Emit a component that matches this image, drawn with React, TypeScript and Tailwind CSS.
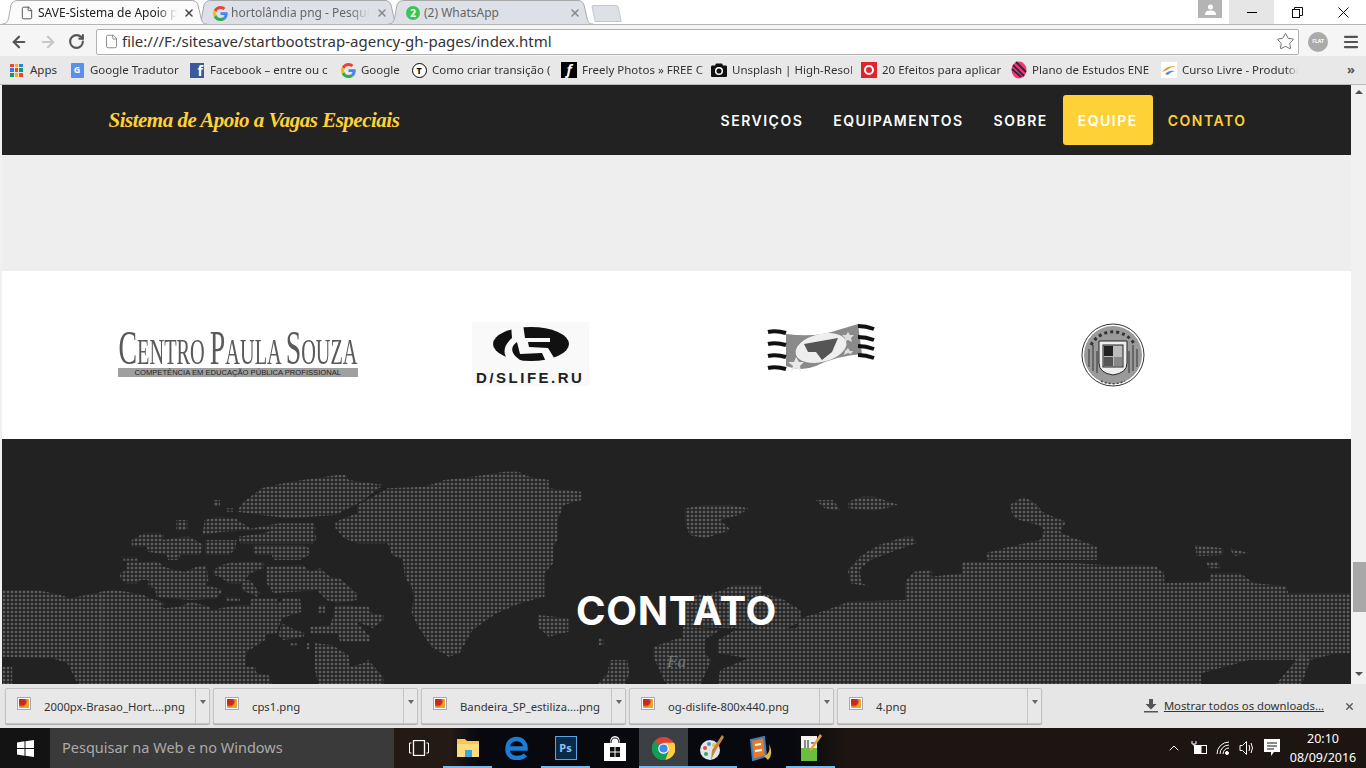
import { ArrowLeft, ArrowRight, ChevronUp, File, Menu, RotateCw, Star, X } from "lucide-react";

const uiFont = "font-['Noto_Sans',sans-serif]";

// map shapes traced from crops of the reference, each list has its own crop origin and scale
const leftLand: number[][] = [
  [1160,95,1190,95,1215,110,1260,120,1260,145,1335,155,1335,180,1295,195,1280,240,1280,300,1270,320,1270,370,1250,400,1250,470,1195,490,1140,520,1085,570,1055,640,1030,650,990,620,960,560,945,520,950,470,945,440,930,415,925,360,900,345,890,310,820,310,790,295,770,265,770,245,820,220,820,195,870,160,890,145,975,140,1020,120,1085,110],
  [695,120,775,105,795,105,800,120,880,135,830,185,770,225,660,235,600,225,545,215,555,190,600,145,650,130],
  [640,250,720,250,725,270,560,270],
  [405,240,430,240,430,270,405,270],
  [470,240,500,230,540,235,580,270,510,275,465,285],
  [5,450,85,450,140,465,160,475,235,455,235,735,180,735,155,670,120,655,5,650],
  [5,680,28,680,28,735,5,735],
  [1235,525,1305,535,1305,575,1260,590,1235,560],
  [1375,595,1385,595,1385,615,1375,615],
  [1400,660,1440,660,1445,700,1435,735,1370,735,1395,700],
  [1500,620,1568,590,1568,735,1530,735,1500,650],
  [490,180,505,180,505,200,490,200],
  [520,205,535,205,535,215,520,215],
];

const rightLand: number[][] = [
  [5,205,50,195,110,195,150,205,130,225,85,240,110,270,50,295,15,285,5,245],
  [305,180,345,180,362,212,325,205],
  [380,185,410,170,440,170,495,195,440,212,380,205],
  [780,170,805,185,830,220,880,245,865,275,880,285,950,320,950,360,700,360,695,340,750,320,820,300,830,270,815,255,760,235,750,195],
  [530,290,535,310,460,345,430,360,405,390,410,430,430,440,385,430,378,390,410,345,450,315,510,290],
  [1175,315,1240,325,1240,345,1180,348],
  [1255,325,1300,340,1265,348],
  [1200,365,1230,365,1232,385,1208,385],
  [640,365,905,370,1000,378,1040,375,1085,378,1105,400,1105,430,1210,425,1210,400,1280,400,1310,430,1385,438,1390,460,1535,460,1535,640,1500,640,1440,660,1300,660,1190,700,1190,735,80,735,85,690,150,655,80,640,80,600,120,570,260,565,270,535,330,510,380,485,510,480,510,425,530,395,570,390,570,410,640,400],
  [0,560,85,570,50,600,50,640,65,660,40,735,0,735],
  [90,450,115,435,180,435,180,460,225,475,270,510,270,545,230,570,0,560,0,470,60,462],
  [1360,735,1420,640,1440,660,1420,735],
];

const detailLand: number[][] = [
  [95,30,130,10,190,10,190,30,250,20,270,20,310,45,300,75,240,75,235,90,205,90,200,75,145,65,140,50,95,50],
  [315,30,410,30,405,60,385,75,315,75],
  [415,20,490,10,520,0,640,0,650,25,640,40,560,40,420,40],
  [460,45,610,45,628,55,628,75,600,90,520,90,515,75,460,75],
  [70,82,115,82,115,92,70,92],
  [80,95,175,95,190,110,225,120,255,125,290,110,320,105,325,150,320,165,370,180,350,205,270,210,170,200,165,175,145,170,145,150,120,150,115,160,80,160,60,145,60,130,80,120],
  [340,120,365,105,400,95,410,100,420,95,490,95,490,115,450,130,440,145,420,160,385,160,360,140,340,135],
  [425,150,450,150,480,190,470,200,425,180],
  [500,110,610,105,630,125,660,115,690,140,720,145,770,190,770,210,710,220,680,210,650,180,520,190,500,160],
  [378,200,420,205,420,212,378,212],
  [455,205,530,205,530,225,550,205,600,205,605,245,545,265,530,310,495,315,495,330,465,350,440,365,435,410,465,410,470,430,505,435,515,462,0,462,0,185,40,180,80,185,130,195,150,205,190,215,190,235,240,230,270,215,330,230,335,240,385,230,420,225,450,225],
  [655,225,675,225,675,248,655,248],
  [705,225,805,230,815,250,850,255,850,270,820,295,770,275,810,320,810,335,720,335,715,310,630,310,630,290,690,285,700,260],
  [545,280,575,295,615,310,610,320,550,330,535,315],
  [645,340,695,345,745,375,750,410,790,400,805,390,850,440,850,462,655,462,645,420],
  [570,340,590,340,590,348,570,348],
  [620,340,630,340,630,358,620,358],
];

const toPoints = (pts: number[], originX: number) =>
  pts.map((v, i) => (i % 2 === 0 ? originX + v / 2.296 : 440 + v / 3)).join(" ");

const detailPoints = (pts: number[]) =>
  pts.map((v, i) => (i % 2 === 0 ? 98 + v / 3 : 530 + v / 3)).join(" ");

function DotMap() {
  return (
    <svg className="absolute inset-0 h-full w-full" viewBox="0 439 1349 245" preserveAspectRatio="none">
      <defs>
        <pattern id="dots" x="0" y="2" width="4" height="4" patternUnits="userSpaceOnUse">
          <rect x="0.750" y="0.750" width="2.500" height="2.500" fill="#5e5e5e" />
        </pattern>
      </defs>
      {leftLand.map((p, i) => (
        <polygon key={"l" + i} points={toPoints(p, -2)} fill="url(#dots)" />
      ))}
      {rightLand.map((p, i) => (
        <polygon key={"r" + i} points={toPoints(p, 681)} fill="url(#dots)" />
      ))}
      {detailLand.map((p, i) => (
        <polygon key={"d" + i} points={detailPoints(p)} fill="url(#dots)" />
      ))}
    </svg>
  );
}

function GoogleG({ size = 16 }: { size?: number }) {
  return (
    <svg width={size} height={size} viewBox="0 0 48 48" className="shrink-0">
      <path fill="#EA4335" d="M24 9.5c3.5 0 6.7 1.3 9.1 3.5l6.8-6.8C35.8 2.4 30.2 0 24 0 14.6 0 6.5 5.4 2.6 13.2l7.9 6.2C12.400 13.600 17.700 9.500 24 9.500z" />
      <path fill="#4285F4" d="M47 24.500c0-1.600-.1-3.100-.4-4.500H24v9h12.900c-.6 3-2.200 5.500-4.700 7.200l7.600 5.900C44.300 37.900 47 31.700 47 24.500z" />
      <path fill="#FBBC05" d="M10.500 28.600A14.500 14.500 0 0 1 10.500 19.400l-7.900-6.200a24 24 0 0 0 0 21.600z" />
      <path fill="#34A853" d="M24 48c6.500 0 11.900-2.100 15.800-5.800l-7.600-5.900c-2.100 1.400-4.900 2.300-8.200 2.300-6.300 0-11.600-4.100-13.500-9.900l-7.900 6.200C6.500 42.600 14.600 48 24 48z" />
    </svg>
  );
}

function Tab({ title, icon, active, fade }: { title: string; icon: React.ReactNode; active?: boolean; fade?: boolean }) {
  return (
    <div className={`relative -mr-[12px] flex h-[24px] w-[205px] shrink-0 items-center pl-[17px] pr-[12px] pt-[2px] ${active ? "z-10 text-[#222]" : "text-[#666]"}`}>
      <svg className="absolute inset-0 h-full w-full" viewBox="0 0 205 24" preserveAspectRatio="none">
        <path
          d="M0 24 C5 24 6 21 7 16 L9 5 C10 2 12 0.500 16 0.500 L190 0.500 C193 0.500 195 2 196 5 L199 18 C200 22 201 24 205 24"
          fill={active ? "#fbfbfb" : "#dde1e7"}
          stroke="#a9a9a9"
        />
      </svg>
      <span className="relative flex w-[16px] shrink-0 justify-center">{icon}</span>
      <span className={`relative ml-[1px] min-w-0 flex-1 overflow-hidden whitespace-nowrap pl-[2px] text-[12px] ${fade ? "[mask-image:linear-gradient(to_right,black_86%,transparent)]" : ""}`}>
        {title}
      </span>
      <X className={`relative ml-[6px] shrink-0 ${active ? "text-[#444]" : "text-[#888]"}`} size={12} strokeWidth={3} />
    </div>
  );
}

function Bookmark({ icon, label, width }: { icon: React.ReactNode; label: string; width: number }) {
  return (
    <div className="flex shrink-0 items-center gap-[5px]" style={{ width }}>
      <span className="flex w-[16px] shrink-0 justify-center">{icon}</span>
      <span className="min-w-0 flex-1 overflow-hidden whitespace-nowrap text-[11.500px] text-[#333] [mask-image:linear-gradient(to_right,black_90%,transparent)]">
        {label}
      </span>
    </div>
  );
}

function AppsGrid() {
  const colors = ["#e8453c", "#f4b400", "#3b78e7", "#3b78e7", "#e8453c", "#0f9d58", "#0f9d58", "#f4b400", "#e8453c"];
  return (
    <span className="grid h-[13px] w-[13px] grid-cols-3 gap-[1px]">
      {colors.map((c, i) => (
        <span key={i} style={{ background: c }} />
      ))}
    </span>
  );
}

function BrowserChrome() {
  return (
    <div className={`shrink-0 ${uiFont}`}>
      <div className="flex h-[24px] items-end bg-white pl-[2px]">
        <Tab active fade title="SAVE-Sistema de Apoio pa" icon={<File size={14} strokeWidth={1.5} className="text-[#444]" />} />
        <Tab fade title="hortolândia png - Pesquisa" icon={<GoogleG size={15} />} />
        <Tab
          title="(2) WhatsApp"
          icon={
            <span className="flex h-[14px] w-[14px] items-center justify-center rounded-full bg-[#3dc552] text-[10px] font-bold leading-none text-white">2</span>
          }
        />
        <div className="ml-[12px] mb-[2px] h-[17px] w-[27px] rounded-t-[3px] border border-[#c3c7cc] bg-[#dde1e7] [transform:skewX(12deg)]" />
        <div className="flex-1" />
        <div className="mb-[6px] mr-[7px] flex h-[18px] w-[24px] items-center justify-center bg-[#b4b4b4]">
          <svg width="11" height="11" viewBox="0 0 11 11" fill="#fff"><circle cx="5.500" cy="3" r="2.500" /><path d="M0 11 C0 7 3 6.500 5.500 6.500 S11 7 11 11z" /></svg>
        </div>
        <div className="flex h-[24px] w-[45px] items-center justify-center bg-[#e6e6e6]"><div className="h-[1px] w-[10px] bg-black" /></div>
        <div className="flex h-[24px] w-[46px] items-center justify-center">
          <svg width="11" height="11" viewBox="0 0 11 11" fill="none" stroke="#111"><rect x="0.500" y="2.500" width="7" height="8" /><path d="M2.500 2.500 V0.500 H10.500 V8.500 H7.500" /></svg>
        </div>
        <div className="flex h-[24px] w-[46px] items-center justify-center">
          <svg width="11" height="11" viewBox="0 0 11 11" stroke="#111"><path d="M0.500 0.500 L10.500 10.500 M10.500 0.500 L0.500 10.500" /></svg>
        </div>
      </div>
      <div className="flex h-[32px] items-center border-t border-[#b5b5b5] bg-[#f5f5f5] pl-[10px] pr-[6px] pt-[2px]">
        <ArrowLeft size={18} strokeWidth={3} className="text-[#555]" />
        <ArrowRight size={18} strokeWidth={3} className="ml-[11px] text-[#c8c8c8]" />
        <RotateCw size={17} strokeWidth={3} className="ml-[11px] text-[#555]" />
        <div className="ml-[11px] flex h-[26px] w-[1204px] items-center rounded-[2px] border border-[#b0b0b0] bg-white pl-[7px] pr-[3px]">
          <File size={15} strokeWidth={1.3} className="text-[#777]" />
          <span className="ml-[3px] flex-1 text-[15px] text-[#333]">file:///F:/sitesave/startbootstrap-agency-gh-pages/index.html</span>
          <Star size={19} strokeWidth={1.2} className="text-[#666]" />
        </div>
        <div className="ml-[9px] flex h-[20px] w-[20px] items-center justify-center rounded-full bg-[#aaa] text-[5px] font-bold text-white">FLAT</div>
        <Menu size={18} strokeWidth={3} className="ml-[14px] text-[#555]" />
      </div>
      <div className="flex h-[29px] items-center border-b border-[#b8b8b8] bg-[#e8e8e8] pl-[10px]">
        <div className="flex w-[59px] shrink-0 items-center gap-[7px]">
          <AppsGrid />
          <span className="text-[11.500px] text-[#333]">Apps</span>
        </div>
        <Bookmark
          width={120}
          label="Google Tradutor"
          icon={<span className="flex h-[15px] w-[13px] items-center justify-center rounded-[1px] bg-[#5a8ff0] text-[9px] font-bold text-white">G</span>}
        />
        <Bookmark
          width={151}
          label="Facebook – entre ou c"
          icon={<span className="flex h-[15px] w-[14px] items-end justify-end bg-[#3b5998] pr-[1px] text-[14px] font-bold leading-[15px] text-white">f</span>}
        />
        <Bookmark width={71} label="Google" icon={<GoogleG size={15} />} />
        <Bookmark
          width={150}
          label="Como criar transição ("
          icon={<span className="flex h-[15px] w-[15px] items-center justify-center rounded-full border-[1.5px] border-black bg-white text-[9px] font-bold leading-none text-black">T</span>}
        />
        <Bookmark
          width={150}
          label="Freely Photos » FREE C"
          icon={<span className="flex h-[16px] w-[16px] items-center justify-center bg-black text-[14px] font-bold italic leading-none text-white">f</span>}
        />
        <Bookmark
          width={150}
          label="Unsplash | High-Resol"
          icon={
            <svg width="16" height="14" viewBox="0 0 16 14"><path d="M1 2.500 H4 L5 0.500 H11 L12 2.500 H15 Q16 2.500 16 4 V13 Q16 14 15 14 H1 Q0 14 0 13 V4 Q0 2.500 1 2.500z" fill="#111" /><circle cx="8" cy="8" r="3.300" fill="none" stroke="#fff" strokeWidth="1.500" /></svg>
          }
        />
        <Bookmark
          width={150}
          label="20 Efeitos para aplicar"
          icon={<span className="flex h-[16px] w-[16px] items-center justify-center bg-[#e2232e]"><span className="h-[10px] w-[10px] rounded-full border-[2px] border-white" /></span>}
        />
        <Bookmark
          width={150}
          label="Plano de Estudos ENE"
          icon={
            <svg width="16" height="18" viewBox="0 0 16 18"><ellipse cx="8" cy="9" rx="7.500" ry="8.500" fill="#ef3a6c" /><path d="M2 4 L13 15 M1 8 L10 16 M5 1 L15 11" stroke="#26264a" strokeWidth="1.800" /></svg>
          }
        />
        <Bookmark
          width={137}
          label="Curso Livre - Produtor"
          icon={
            <span className="flex h-[16px] w-[16px] items-center justify-center bg-white">
              <svg width="14" height="10" viewBox="0 0 14 10"><path d="M0 7 Q5 0 14 1 Q8 2 5 5z" fill="#f58a1f" /><path d="M3 9 Q7 5 13 6 Q8 7 6 10z" fill="#4a8fc7" /></svg>
            </span>
          }
        />
        <span className="ml-[49px] text-[13px] font-bold text-[#555]">»</span>
      </div>
    </div>
  );
}

function NavLink({ label, active, accent }: { label: string; active?: boolean; accent?: boolean }) {
  return (
    <a className={`flex h-[50px] items-center rounded-[3px] px-[15px] font-['Inter',sans-serif] text-[14px] font-semibold tracking-[1.500px] ${active ? "bg-[#fed136] text-white" : accent ? "text-[#fed136]" : "text-white"}`}>
      {label}
    </a>
  );
}

function CpsLogo() {
  return (
    <div className="mt-[8px] flex w-[240px] flex-col items-center">
      <div className="h-[36px] whitespace-nowrap font-['Liberation_Serif',serif] text-[35px] leading-[36px] text-[#5a5a5a] [transform:scaleX(0.58)]">
        <span className="text-[48px] leading-[36px]">C</span>ENTRO <span className="text-[48px] leading-[36px]">P</span>AULA <span className="text-[48px] leading-[36px]">S</span>OUZA
      </div>
      <div className="mt-[2px] flex h-[9px] w-[240px] items-center justify-center bg-[#a0a0a0] font-['Liberation_Sans',sans-serif] text-[7.600px] leading-none whitespace-nowrap text-[#222]">
        COMPETÊNCIA EM EDUCAÇÃO PÚBLICA PROFISSIONAL
      </div>
    </div>
  );
}

function DislifeLogo() {
  return (
    <div className="flex h-[64px] w-[117px] flex-col items-center bg-[#f9f9f9]">
      <svg width="80" height="42" viewBox="0 0 80 42" className="mt-[2px]">
        <ellipse cx="41" cy="20" rx="38" ry="17" fill="#111" />
        <path d="M21 0 L33 0 L35 14 L60 14 L60 18 L38 18 L39 23 L58 24 L66 37 L58 42 L52 29 L30 30 L27 18 Q16 26 30 36 L44 42 L24 42 Q6 28 22 14z" fill="#f9f9f9" />
      </svg>
      <div className="mt-[7px] h-[11px] overflow-hidden">
        <div className="-mt-[3px] font-['Liberation_Sans',sans-serif] text-[15px] font-bold leading-[15px] tracking-[2.500px] whitespace-nowrap text-[#222]">D/SLIFE.RU</div>
      </div>
    </div>
  );
}

function FlagLogo() {
  return (
    <svg width="110" height="50" viewBox="0 0 110 50" className="mt-[2px] mr-[4px]">
      <path d="M20 10 Q50 14 72 6 L92 0 L96 30 Q70 32 50 42 Q35 48 20 42z" fill="#8a8a8a" />
      <g stroke="#111" strokeWidth="4">
        <path d="M2 8 Q10 6 20 9 M2 20 Q10 18 20 21 M2 32 Q10 30 20 33 M2 44 Q10 42 20 45" />
        <path d="M92 2 Q100 2 108 5 M92 13 Q100 13 108 16 M92 22 Q100 22 108 25 M92 31 Q100 31 108 34" />
      </g>
      <ellipse cx="55" cy="24" rx="26" ry="14" fill="#eee" transform="rotate(-14 55 24)" />
      <path d="M38 20 L72 14 L66 28 L56 36 L50 28 L42 28z" fill="#555" />
      <path d="M30 33 L33 38 L38 38 L34 42 L35 47 L30 44 L25 47 L27 42 L22 38 L28 38z" fill="#e8e8e8" />
      <path d="M82 8 L84 11 L88 11 L85 14 L86 18 L82 16 L78 18 L79 14 L76 11 L80 11z" fill="#ddd" />
      <path d="M82 24 L84 27 L87 27 L85 30 L82 29 L78 31 L79 27z" fill="#ddd" />
    </svg>
  );
}

function SealLogo() {
  return (
    <svg width="64" height="64" viewBox="0 0 64 64" className="mt-[1px] mr-[4px]">
      <circle cx="32" cy="32" r="31" fill="#fff" stroke="#333" strokeWidth="1" />
      <circle cx="32" cy="32" r="29" fill="#9a9a9a" />
      <g stroke="#666" strokeWidth="2">
        <path d="M8 44 V26 M12 48 V22 M16 50 V28 M48 50 V28 M52 48 V22 M56 44 V26" />
      </g>
      <path d="M18 18 H46 V40 Q46 50 32 52 Q18 50 18 40z" fill="#eee" stroke="#222" strokeWidth="1" />
      <rect x="22" y="22" width="20" height="22" fill="#bbb" stroke="#222" />
      <rect x="23" y="23" width="9" height="10" fill="#222" />
      <rect x="23" y="34" width="9" height="9" fill="#555" />
      <rect x="33" y="34" width="8" height="9" fill="#888" />
      <path d="M10 22 A25 25 0 0 1 54 22" fill="none" stroke="#333" strokeWidth="3" strokeDasharray="3 3" />
      <path d="M20 58 A28 28 0 0 0 44 58" fill="none" stroke="#444" strokeWidth="1.500" strokeDasharray="2 2" />
    </svg>
  );
}

function Scrollbar() {
  return (
    <div className="flex w-[15px] shrink-0 flex-col items-center bg-[#f1f1f1]">
      <div className="mt-[5px] h-0 w-0 border-x-[4px] border-b-[4px] border-x-transparent border-b-[#505050]" />
      <div className="mt-[468px] ml-[2px] h-[50px] w-[13px] bg-[#a8a8a8]" />
      <div className="mt-[60px] h-0 w-0 border-x-[4px] border-t-[4px] border-x-transparent border-t-[#505050]" />
    </div>
  );
}

function Page() {
  return (
    <div className="flex min-h-0 flex-1">
      <div className="w-[2px] shrink-0 bg-[#f1f1f1]" />
      <div className="flex min-w-0 flex-1 flex-col overflow-hidden">
        <nav className="h-[70px] shrink-0 bg-[#222]">
          <div className="mx-auto flex h-full w-[1170px] items-center justify-between pl-[17px]">
            <span className="pt-[2px] font-['Liberation_Serif',serif] text-[21px] font-bold italic tracking-[-0.500px] text-[#fed136]">Sistema de Apoio a Vagas Especiais</span>
            <div className="flex items-center">
              <NavLink label="SERVIÇOS" />
              <NavLink label="EQUIPAMENTOS" />
              <NavLink label="SOBRE" />
              <NavLink label="EQUIPE" active />
              <NavLink label="CONTATO" accent />
            </div>
          </div>
        </nav>
        <div className="h-[116px] shrink-0 bg-[#eee]" />
        <section className="h-[168px] shrink-0 bg-white">
          <div className="mx-auto grid w-[1170px] grid-cols-4 items-start pt-[51px]">
            <div className="flex justify-center"><CpsLogo /></div>
            <div className="flex justify-center"><DislifeLogo /></div>
            <div className="flex justify-center"><FlagLogo /></div>
            <div className="flex justify-center"><SealLogo /></div>
          </div>
        </section>
        <section className="relative flex-1 overflow-hidden bg-[#222] text-center">
          <DotMap />
          <h2 className="relative mt-[148px] font-['Inter',sans-serif] text-[40px] leading-[48px] font-bold tracking-[0.600px] text-white">CONTATO</h2>
          <p className="relative mt-[14px] font-['Liberation_Serif',serif] text-[17px] italic text-[#777]">Fa</p>
        </section>
      </div>
      <Scrollbar />
    </div>
  );
}

function FileThumb() {
  return (
    <span className="mb-[5px] flex h-[13px] w-[14px] items-center justify-center border border-[#aaa] bg-white">
      <span className="h-[9px] w-[10px] bg-[radial-gradient(circle_at_30%_30%,#c8281e_35%,#f0a52a_60%)]" />
    </span>
  );
}

function DownloadItem({ name }: { name: string }) {
  return (
    <div className="flex h-[36px] w-[205px] shrink-0 items-center rounded-[2px] border border-[#c4c4c4] bg-[#e8e8e8] shadow-[0_1px_1px_rgba(0,0,0,0.25)]">
      <div className="flex flex-1 items-center gap-[13px] pl-[11px]">
        <FileThumb />
        <span className="pt-[2px] text-[11.300px] text-[#333]">{name}</span>
      </div>
      <div className="flex h-full w-[14px] justify-center border-l border-[#c4c4c4] pt-[11px]">
        <div className="h-0 w-0 border-x-[3px] border-t-[4px] border-x-transparent border-t-[#666]" />
      </div>
    </div>
  );
}

function DownloadBar() {
  return (
    <div className={`flex h-[44px] shrink-0 items-center bg-[#e6e6e6] pl-[5px] pr-[11px] ${uiFont}`}>
      <div className="flex gap-[3px]">
        <DownloadItem name="2000px-Brasao_Hort....png" />
        <DownloadItem name="cps1.png" />
        <DownloadItem name="Bandeira_SP_estiliza....png" />
        <DownloadItem name="og-dislife-800x440.png" />
        <DownloadItem name="4.png" />
      </div>
      <div className="flex-1" />
      <svg width="14" height="14" viewBox="0 0 14 14" fill="#555"><path d="M5 0 H9 V5 H12.500 L7 10.500 L1.500 5 H5z" /><rect x="0" y="12" width="14" height="1.500" /></svg>
      <span className="ml-[6px] pt-[1px] text-[11.300px] text-[#333] underline">Mostrar todos os downloads...</span>
      <X size={11} strokeWidth={3} className="ml-[20px] text-[#555]" />
    </div>
  );
}

function TaskIcon({ children, active, current }: { children: React.ReactNode; active?: boolean; current?: boolean }) {
  return (
    <div className={`flex h-[40px] w-[49px] shrink-0 items-center justify-center ${current ? "bg-[#3c4045]" : ""} ${active ? "border-b-2 border-[#76b9ed] pt-[2px]" : ""}`}>
      {children}
    </div>
  );
}

function Taskbar() {
  return (
    <div className={`flex h-[40px] shrink-0 items-center bg-[linear-gradient(90deg,#241a15_0%,#241a15_33%,#08080f_35%,#08080f_58%,#1c1512_62%,#1c1512_100%)] ${uiFont}`}>
      <div className="flex h-full w-[50px] items-center justify-center bg-[#131313]">
        <svg width="17" height="17" viewBox="0 0 17 17" fill="#fff"><path d="M0 2.400 L7.500 1.300 V8 H0z M8.500 1.200 L17 0 V8 H8.500z M0 9 H7.500 V15.700 L0 14.600z M8.500 9 H17 V17 L8.500 15.800z" /></svg>
      </div>
      <div className="flex h-full w-[344px] items-center bg-[#3a3a3a] pl-[12px] text-[14.500px] text-[#aaa]">Pesquisar na Web e no Windows</div>
      <TaskIcon>
        <svg width="20" height="16" viewBox="0 0 20 16" fill="none" stroke="#fff"><rect x="4.500" y="0.500" width="11" height="15" strokeWidth="1.300" /><path d="M2.500 3 H0.500 V13 H2.500 M17.500 3 H19.500 V13 H17.500" /></svg>
      </TaskIcon>
      <TaskIcon active>
        <svg width="22" height="22" viewBox="0 0 22 22"><path d="M0 2 H8 L10 4 H22 V20 H0z" fill="#f5c94e" /><rect x="0" y="7" width="22" height="13" fill="#fbdc80" /><rect x="8" y="13" width="7" height="7" fill="#3aa6dd" /></svg>
      </TaskIcon>
      <TaskIcon>
        <svg width="24" height="24" viewBox="0 0 24 24" fill="none" stroke="#1b7ed6" strokeWidth="4.500"><path d="M4 12.500 H20.500 C20.500 6.500 16.500 3 11.500 3 C6 3 2.500 7 2.500 13 C2.500 19 6.500 22 12 22 C15.500 22 18.500 21 20.500 19" /></svg>
      </TaskIcon>
      <TaskIcon active>
        <div className="flex h-[24px] w-[22px] items-center justify-center border border-[#5aa4e6] bg-[#0a2a4a] text-[11px] font-bold text-[#8cc4f0]">Ps</div>
      </TaskIcon>
      <TaskIcon>
        <svg width="22" height="25" viewBox="0 0 22 25"><path d="M0 7 H6 Q6 0 11 0 Q16 0 16 7 H22 V25 H0z" fill="#fff" /><path d="M7 7 Q7 2 11 2 Q15 2 15 7" fill="none" stroke="#111" /><path d="M6 11 H10.500 V15.500 H6z M11.500 11 H16 V15.500 H11.500z M6 16.500 H10.500 V21 H6z M11.500 16.500 H16 V21 H11.500z" fill="#111" /></svg>
      </TaskIcon>
      <TaskIcon active current>
        <svg width="23" height="23" viewBox="0 0 24 24">
          <circle cx="12" cy="12" r="12" fill="#db4437" />
          <path d="M12 12 L1.600 18 A12 12 0 0 1 3 4.100z" fill="#0f9d58" />
          <path d="M12 24 A12 12 0 0 1 1.600 18 L7 14 L12 12 L22.400 18 A12 12 0 0 1 12 24z" fill="#0f9d58" />
          <path d="M12 6 H23 A12 12 0 0 1 14 23.800 L17.200 15z" fill="#ffcd40" />
          <circle cx="12" cy="12" r="5.500" fill="#fff" />
          <circle cx="12" cy="12" r="4.300" fill="#4285f4" />
        </svg>
      </TaskIcon>
      <TaskIcon active>
        <svg width="25" height="27" viewBox="0 0 25 27">
          <ellipse cx="10" cy="15" rx="10" ry="10" fill="#dfe6ee" />
          <circle cx="5" cy="13" r="2" fill="#e84c3d" /><circle cx="9" cy="9" r="2" fill="#3a9ad9" /><circle cx="14" cy="10" r="2" fill="#f2c230" /><circle cx="6" cy="19" r="2" fill="#3aa655" />
          <path d="M22 0 L24 2 L15 17 L11 25 L12 15z" fill="#c8873a" />
        </svg>
      </TaskIcon>
      <TaskIcon>
        <svg width="25" height="25" viewBox="0 0 25 25"><path d="M2 4 L15 1 L17 20 L4 24z" fill="#e8792b" stroke="#3a7fc0" strokeWidth="2" /><path d="M6 9 L12 8 M6 15 L13 14" stroke="#fff" strokeWidth="2" /><path d="M15 20 Q22 18 20 8 Q25 18 19 24z" fill="#e5b73b" /></svg>
      </TaskIcon>
      <TaskIcon active>
        <svg width="22" height="28" viewBox="0 0 22 28"><path d="M1 2 H17 V27 H1z" fill="#f3f3f3" /><path d="M1 14 H17 V27 H1z" fill="#6cbf3e" /><path d="M5 6 V14 M8 6 V14 M11 9 H15" stroke="#222" /><path d="M20 0 L22 2 L12 16 L10 17 L10.500 14z" fill="#e8a33c" /></svg>
      </TaskIcon>
      <div className="flex-1" />
      <div className="flex items-center">
        <ChevronUp size={16} strokeWidth={1.5} className="text-white" />
        <svg width="16" height="14" viewBox="0 0 16 14" fill="none" stroke="#fff" className="ml-[9px]"><rect x="3.500" y="4.500" width="12" height="8" /><rect x="4" y="5" width="6" height="7" fill="#fff" /><path d="M1 0 V3 H5 V0 M3 3 V5" /></svg>
        <svg width="16" height="14" viewBox="0 0 16 14" fill="none" stroke="#fff" className="ml-[9px]"><path d="M1 13 A12 12 0 0 1 13 1 M4 13 A9 9 0 0 1 13 4 M7 13 A6 6 0 0 1 13 7" /><circle cx="11" cy="12" r="1.500" fill="#fff" /></svg>
        <svg width="16" height="16" viewBox="0 0 16 16" fill="none" stroke="#fff" className="ml-[7px]"><path d="M1 5.500 H3.500 L7.500 1.500 V14.500 L3.500 10.500 H1z" /><path d="M10 5 Q11.500 8 10 11 M12 3 Q15 8 12 13" /></svg>
        <svg width="16" height="18" viewBox="0 0 16 18" fill="#fff" className="ml-[9px]"><path d="M0 0 H16 V13 H10 L7 17 V13 H0z" /><path d="M3 4 H13 M3 7 H13 M3 10 H10" stroke="#1c1512" /></svg>
      </div>
      <div className="ml-[14px] flex w-[72px] shrink-0 flex-col items-center pr-[14px] text-[12.500px] leading-[19px] text-white">
        <span>20:10</span>
        <span className="whitespace-nowrap">08/09/2016</span>
      </div>
    </div>
  );
}

export default function App() {
  return (
    <div className="flex h-[768px] w-[1366px] flex-col overflow-hidden">
      <BrowserChrome />
      <Page />
      <DownloadBar />
      <Taskbar />
    </div>
  );
}
